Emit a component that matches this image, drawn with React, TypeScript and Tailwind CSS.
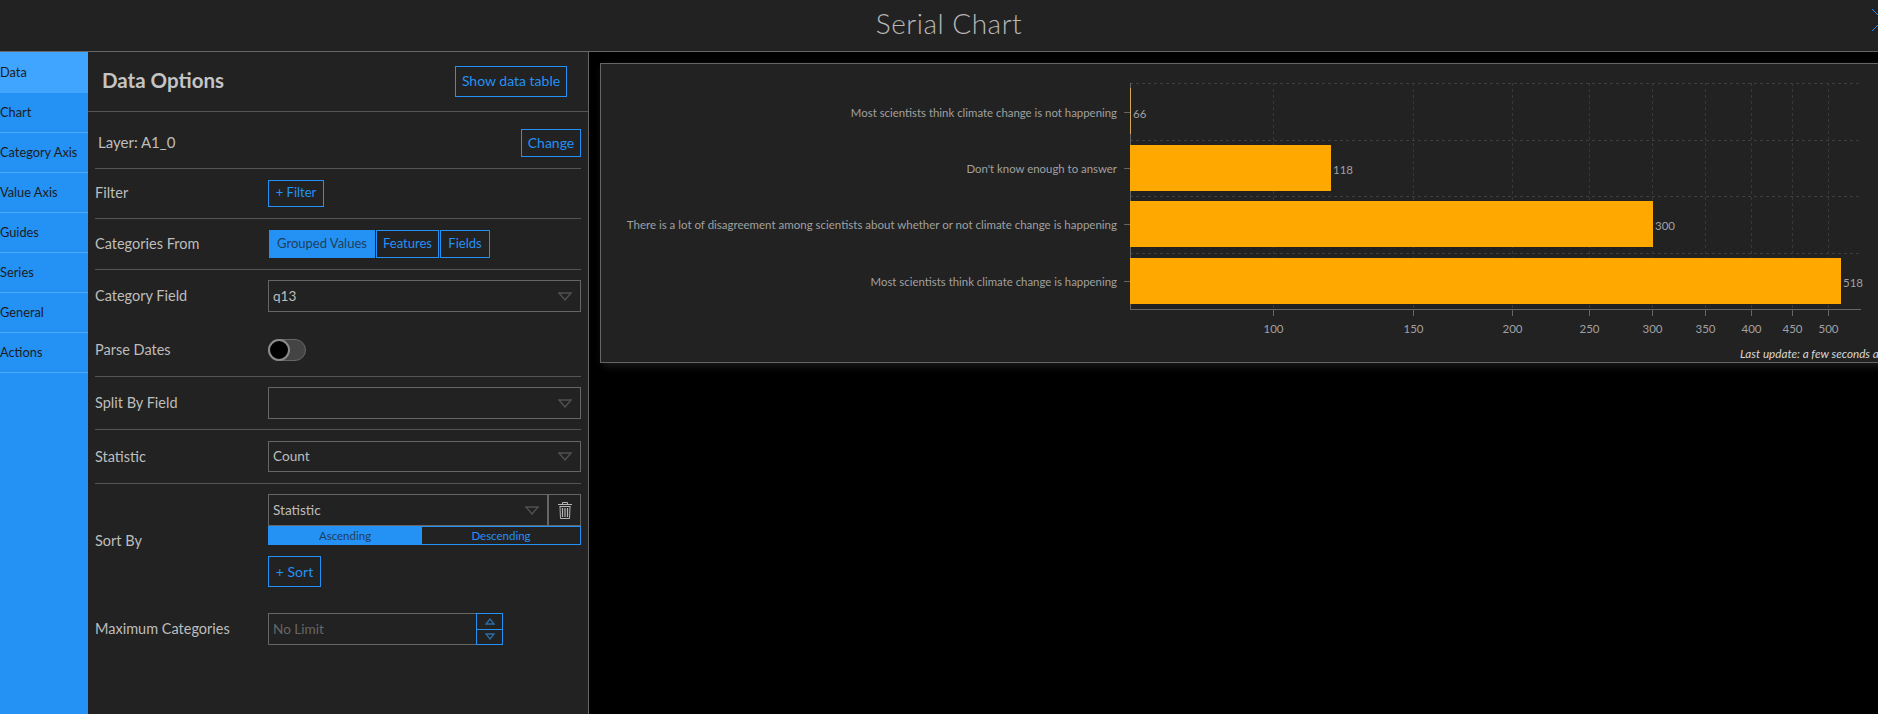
import React from "react";

const navItems = ["Data", "Chart", "Category Axis", "Value Axis", "Guides", "Series", "General", "Actions"];

const rows = [
  { label: "Most scientists think climate change is not happening", y: 112, top: 88, end: 1131, value: "66", size: 11.4 },
  { label: "Don't know enough to answer", y: 168, top: 145, end: 1331, value: "118", size: 11.4 },
  { label: "There is a lot of disagreement among scientists about whether or not climate change is happening", y: 224, top: 201, end: 1653, value: "300", size: 11.5 },
  { label: "Most scientists think climate change is happening", y: 281, top: 258, end: 1841, value: "518", size: 11.4 },
];

const ticks = [
  { x: 1273.5, v: "100" },
  { x: 1413.5, v: "150" },
  { x: 1512.5, v: "200" },
  { x: 1589.5, v: "250" },
  { x: 1652.5, v: "300" },
  { x: 1705.5, v: "350" },
  { x: 1751.5, v: "400" },
  { x: 1792.5, v: "450" },
  { x: 1828.5, v: "500" },
];

function Arrow() {
  return (
    <svg width="14" height="9" viewBox="0 0 14 9">
      <path d="M1 1h12L7 8z" fill="none" stroke="#505050" strokeWidth="1.4" />
    </svg>
  );
}

function Select({ value, className = "" }: { value?: string; className?: string }) {
  return (
    <div className={`flex items-center justify-between border border-[#666] pr-[8px] pl-[4px] text-[13.6px] text-[#bdbdbd] ${className}`}>
      <span>{value}</span>
      <Arrow />
    </div>
  );
}

function TrashIcon() {
  return (
    <svg width="14" height="17" viewBox="0 0 14 17" fill="none" stroke="#b4b4b4" strokeWidth="1">
      <path d="M4.5 2.5v-2h5v2M0 2.5h14M1.5 4.5h11M2 4.5l.5 12h9l.5-12" />
      <path d="M4.5 6v9M7 6v9M9.5 6v9" strokeWidth="1.2" />
    </svg>
  );
}

function Chart() {
  return (
    <svg width="1297" height="297" className="block" style={{ fontFamily: "Lato, sans-serif" }}>
      <g transform="translate(-601 -64)">
        {[83.5, 140.5, 196.5, 253.5].map((y) => (
          <line key={y} x1="1130" x2="1861" y1={y} y2={y} stroke="#3e3e3e" strokeDasharray="3 3" />
        ))}
        {ticks.map((t) => (
          <line key={t.v} x1={t.x} x2={t.x} y1="83" y2="309" stroke="#383838" strokeDasharray="3 3" />
        ))}
        <line x1="1130.5" x2="1130.5" y1="83" y2="310" stroke="#666" />
        <line x1="1130" x2="1861" y1="309.5" y2="309.5" stroke="#666" />
        {rows.map((r) => (
          <g key={r.label}>
            <line x1="1124" x2="1130" y1={r.y + 0.5} y2={r.y + 0.5} stroke="#666" />
            <text x="1117" y={r.y + 4.5} textAnchor="end" fontSize={r.size} fill="#a0a0a0">
              {r.label}
            </text>
            <rect x="1130" y={r.top} width={r.end - 1130} height="46" fill={r.value === "66" ? "#d4a75a" : "#ffa900"} />
            <text x={r.end + 2} y={r.y + 6} fontSize="11.5" fill="#a0a0a0">
              {r.value}
            </text>
          </g>
        ))}
        {ticks.map((t) => (
          <g key={t.v}>
            <line x1={t.x} x2={t.x} y1="309" y2="316" stroke="#666" />
            <text x={t.x} y="333" textAnchor="middle" fontSize="11.5" fill="#a0a0a0">
              {t.v}
            </text>
          </g>
        ))}
        <text x="1740" y="358" fontSize="11.7" fontStyle="italic" fill="#d8d8d8">
          Last update: a few seconds ago
        </text>
      </g>
    </svg>
  );
}

export default function App() {
  return (
    <div className="h-screen w-full overflow-hidden bg-black font-['Lato',sans-serif]">
      <div className="flex h-[714px] w-[1898px] flex-col">
        {/* Title bar */}
        <header className="relative flex h-[52px] shrink-0 items-center justify-center border-b border-[#666] bg-[#222] pb-[5px]">
          <h1 className="text-[28px] leading-none font-light tracking-[0.5px] text-[#b8b8b8]">Serial Chart</h1>
          <svg width="24" height="24" viewBox="0 0 24 24" className="absolute top-[8px] right-[3px]">
            <path d="M1 1l22 22M23 1L1 23" stroke="#2491f5" strokeWidth="1" fill="none" />
          </svg>
        </header>

        <div className="flex min-h-0 flex-1">
          {/* Tabs */}
          <nav className="w-[88px] shrink-0 bg-[#2491f5]">
            {navItems.map((item, i) => (
              <div
                key={item}
                className={`flex items-center overflow-hidden text-[12.8px] whitespace-nowrap text-[#1c1c1c] ${i === 0 ? "h-[41px] bg-[#40a5ff]" : "h-[40px] border-b border-[#4fa9fa] pt-[1px]"}`}
              >
                {item}
              </div>
            ))}
          </nav>

          {/* Data options panel */}
          <section className="w-[501px] shrink-0 border-r border-[#666] bg-[#222] text-[14.5px] text-[#bdbdbd]">
            <div className="flex h-[60px] items-center justify-between border-b border-[#555] pr-[21px] pl-[14px]">
              <h2 className="pb-[2px] text-[20.5px] font-bold text-[#c4c4c4]">Data Options</h2>
              <button className="h-[31px] w-[112px] border border-[#2491f5] pb-[3px] text-[14px] text-[#2491f5]">Show data table</button>
            </div>

            <div className="px-[7px]">
              <div className="flex h-[57px] items-center justify-between border-b border-[#555] pt-[6px] pl-[3px]">
                <span className="pb-[2px] text-[15px]">Layer: A1_0</span>
                <button className="h-[28px] w-[60px] border border-[#2491f5] pb-[2px] text-[14px] text-[#2491f5]">Change</button>
              </div>

              <div className="flex h-[50px] items-center border-b border-[#555]">
                <span className="w-[173px] pb-[2px]">Filter</span>
                <button className="h-[27px] w-[56px] border border-[#2491f5] pb-[1px] text-[13px] text-[#2491f5]">+ Filter</button>
              </div>

              <div className="flex h-[51px] items-center border-b border-[#555]">
                <span className="w-[174px] pb-[1px]">Categories From</span>
                <div className="flex gap-[1px] text-[13px]">
                  <button className="h-[28px] w-[106px] bg-[#2491f5] pb-[1px] text-[#1f3f5c]">Grouped Values</button>
                  <button className="h-[28px] w-[63px] border border-[#2491f5] pb-[1px] text-[#2491f5]">Features</button>
                  <button className="h-[28px] w-[50px] border border-[#2491f5] pb-[1px] text-[#2491f5]">Fields</button>
                </div>
              </div>

              <div className="flex h-[54px] items-center pb-[2px]">
                <span className="w-[173px]">Category Field</span>
                <Select value="q13" className="h-[32px] flex-1" />
              </div>

              <div className="flex h-[53px] items-center border-b border-[#555]">
                <span className="w-[173px]">Parse Dates</span>
                <div className="h-[22px] w-[38px] rounded-full border border-[#666] bg-[#444]">
                  <div className="-mt-px -ml-px h-[22px] w-[22px] rounded-full border-2 border-[#8a8a8a] bg-black" />
                </div>
              </div>

              <div className="flex h-[53px] items-center border-b border-[#555]">
                <span className="w-[173px]">Split By Field</span>
                <Select className="h-[32px] flex-1" />
              </div>

              <div className="flex h-[54px] items-center border-b border-[#555]">
                <span className="w-[173px]">Statistic</span>
                <Select value="Count" className="h-[31px] flex-1" />
              </div>

              <div className="flex h-[115px] items-start pt-[10px]">
                <span className="mt-[36px] w-[173px]">Sort By</span>
                <div className="flex-1">
                  <div className="flex h-[32px]">
                    <Select value="Statistic" className="flex-1" />
                    <div className="flex w-[33px] items-center justify-center border border-[#666]">
                      <TrashIcon />
                    </div>
                  </div>
                  <div className="flex h-[19px] text-[11.5px]">
                    <div className="flex w-[154px] items-center justify-center bg-[#2491f5] text-[#1f3f5c]">Ascending</div>
                    <div className="flex flex-1 items-center justify-center border border-l-0 border-[#2491f5] text-[#2491f5]">Descending</div>
                  </div>
                  <button className="mt-[11px] h-[31px] w-[53px] border border-[#2491f5] text-[14px] text-[#2491f5]">+ Sort</button>
                </div>
              </div>

              <div className="mt-[14px] flex items-center">
                <span className="w-[173px]">Maximum Categories</span>
                <div className="flex h-[32px] w-[235px]">
                  <div className="flex flex-1 items-center border border-r-0 border-[#666] pl-[4px] text-[13.6px] text-[#666]">No Limit</div>
                  <div className="flex w-[27px] flex-col border border-[#2491f5]">
                    <div className="flex flex-1 items-center justify-center border-b border-[#2491f5]">
                      <svg width="10" height="7" viewBox="0 0 10 7"><path d="M1 6h8L5 1z" fill="none" stroke="#2a6ea8" strokeWidth="1.3" /></svg>
                    </div>
                    <div className="flex flex-1 items-center justify-center">
                      <svg width="10" height="7" viewBox="0 0 10 7"><path d="M1 1h8L5 6z" fill="none" stroke="#2a6ea8" strokeWidth="1.3" /></svg>
                    </div>
                  </div>
                </div>
              </div>
            </div>
          </section>

          {/* Chart card */}
          <main className="flex-1 pt-[11px] pl-[11px]">
            <div className="h-[300px] border border-[#666] bg-[#222] shadow-[3px_3px_8px_rgba(60,60,60,0.5)]">
              <Chart />
            </div>
          </main>
        </div>
      </div>
    </div>
  );
}
